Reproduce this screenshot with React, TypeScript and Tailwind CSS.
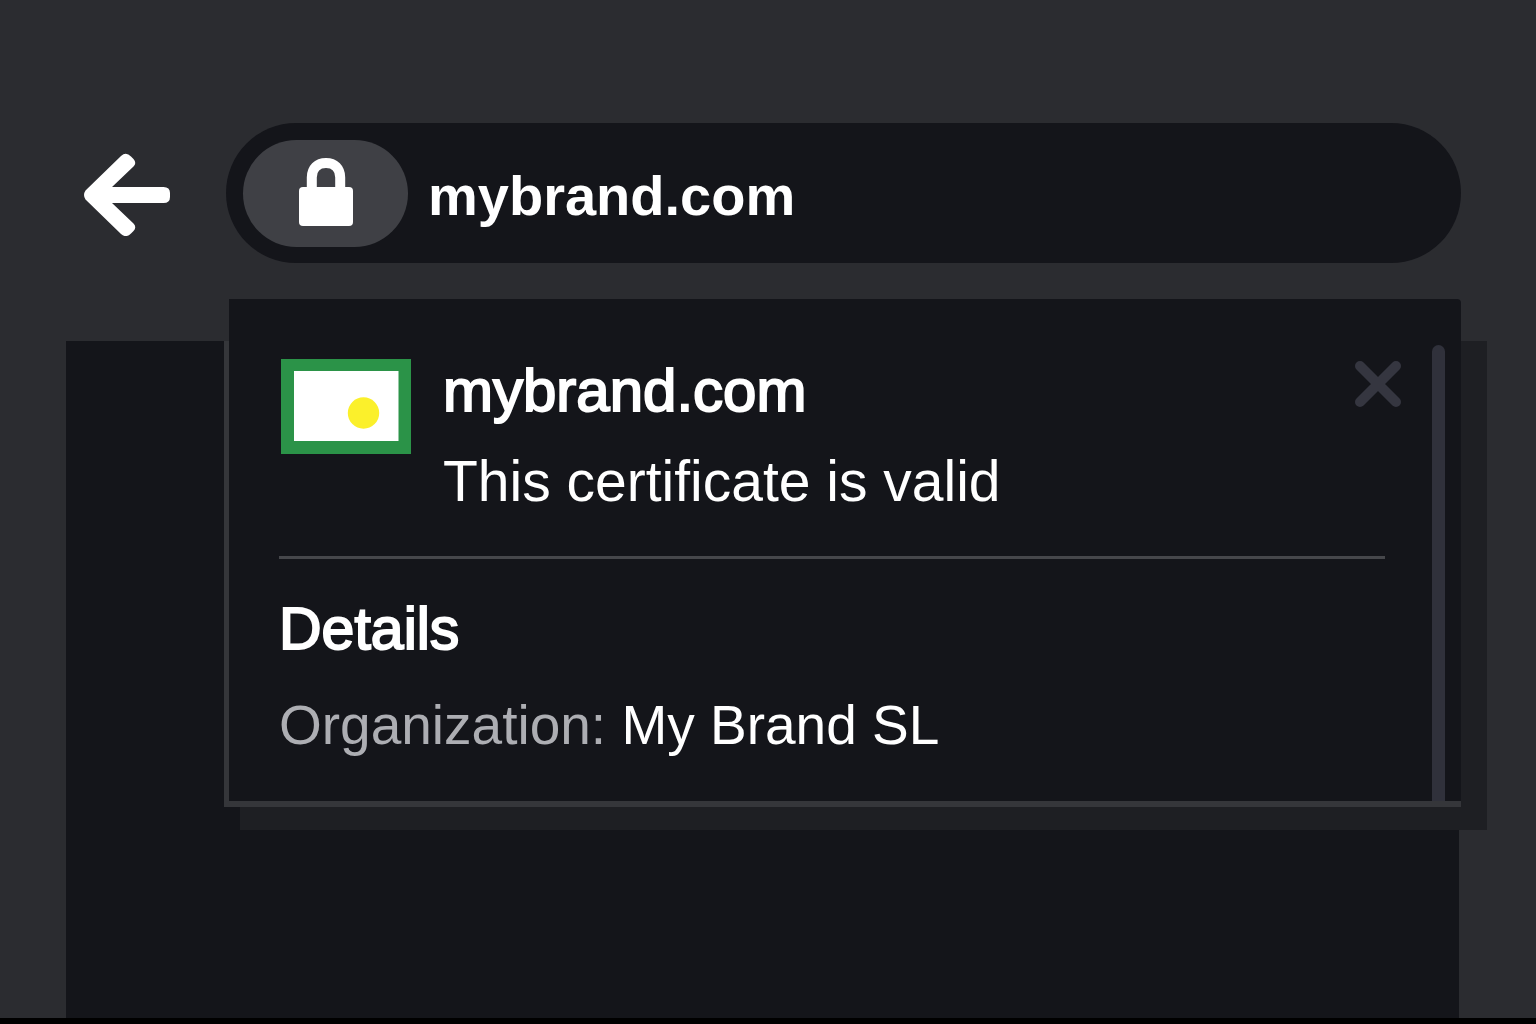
import React from "react";

function BackIcon() {
  return (
    <svg width="86" height="86" viewBox="0 -4 86 86" fill="none" aria-hidden="true">
      <path
        d="M1.5 36.5L37 2Q42 -2.500 47 2.500L49.500 5Q53 9 49.500 12.500L28 33H79.500Q86 33 86 39V43Q86 49 79.500 49H28L49.500 69.500Q53 73 49.500 77L47 79.500Q42 84.500 37 80L1.500 45.500Q-1.500 41 1.500 36.500Z"
        fill="#fff"
      />
    </svg>
  );
}

function LockIcon() {
  return (
    <svg width="54" height="70" viewBox="0 0 54 70" fill="none" aria-hidden="true">
      <path d="M12.8 36V19.5C12.8 10.5 18.5 5 27 5S41.2 10.5 41.2 19.5V36" stroke="#fff" strokeWidth="10" />
      <rect x="0" y="29" width="54" height="39" rx="4" fill="#fff" />
    </svg>
  );
}

function CloseIcon() {
  return (
    <svg width="46" height="46" viewBox="0 0 46 46" fill="none" aria-hidden="true">
      <path d="M5 5L41 41M41 5L5 41" stroke="#353640" strokeWidth="10" strokeLinecap="round" />
    </svg>
  );
}

function BrandLogo() {
  return (
    <svg width="130" height="95" viewBox="0 0 130 95" role="img" aria-label="My Brand logo" className="shrink-0">
      <rect width="130" height="95" fill="#2b9348" />
      <rect x="13" y="12" width="104.500" height="70" fill="#fff" />
      <circle cx="82.500" cy="54" r="15.700" fill="#fbf02b" />
    </svg>
  );
}

function CertificatePopup() {
  return (
    <section
      aria-label="Certificate information"
      className="absolute -top-[42px] left-[163px] -right-[2px]"
    >
      <div className="absolute top-[42px] left-[11px] -right-[26px] -bottom-[29px] bg-[#1e1f23]" />
      <div className="absolute top-[42px] -left-[5px] right-0 -bottom-[6px] bg-[#35363a]" />
      <div className="relative flex rounded-tr-sm bg-[#14151a]">
        <div className="min-w-0 flex-1 pt-[60px] pr-[31px] pb-11 pl-[50px]">
          <div className="flex items-start pl-[2px]">
            <BrandLogo />
            <div className="ml-8 flex-1 text-white">
              <h1 className="text-[60px] leading-16 [-webkit-text-stroke:2px_white]">mybrand.com</h1>
              <p className="mt-[26px] text-[57px] leading-16">This certificate is valid</p>
            </div>
            <button type="button" aria-label="Close" className="mt-[2px]">
              <CloseIcon />
            </button>
          </div>
          <hr className="mt-[43px] mr-4 border-t-[3px] border-[#46474b]" />
          <h2 className="mt-[38px] text-[59px] leading-16 text-white [-webkit-text-stroke:2px_white]">Details</h2>
          <p className="mt-8 text-[55px] leading-16 text-white">
            <span className="text-[#adaeb3]">Organization:</span> My Brand SL
          </p>
        </div>
        <div className="mt-[46px] mr-4 w-[13px] rounded-t-full bg-[#30313b]" />
      </div>
    </section>
  );
}

export default function App() {
  return (
    <div className="flex min-h-screen flex-col border-b-[6px] border-black bg-[#2b2c30] font-['Liberation_Sans',Arial,sans-serif]">
      <header className="flex items-center pt-[123px] pr-[75px] pb-[78px] pl-[84px]">
        <button type="button" aria-label="Back">
          <BackIcon />
        </button>
        <div className="ml-14 flex h-[140px] min-w-0 flex-1 items-center rounded-full bg-[#14151a] pl-[17px]">
          <button
            type="button"
            aria-label="View site information"
            className="flex h-[107px] w-[165px] shrink-0 items-center justify-center rounded-full bg-[#3f4045]"
          >
            <LockIcon />
          </button>
          <input
            type="text"
            aria-label="Address"
            defaultValue="mybrand.com"
            className="ml-5 h-20 min-w-0 flex-1 bg-transparent pt-1.5 text-[56px] font-bold text-white outline-none"
          />
        </div>
      </header>
      <main className="relative mr-[77px] ml-[66px] flex-1 bg-[#14151a]">
        <CertificatePopup />
      </main>
    </div>
  );
}
